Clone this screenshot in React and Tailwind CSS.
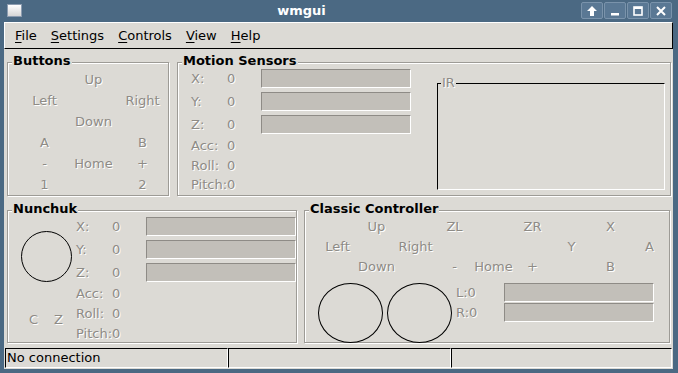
import React from "react";

const G = "text-[#8e8b86] [text-shadow:1px_1px_0_#fff]";

function Frame({ label, className, children }) {
  return (
    <div
      className={
        "relative border border-[#9d9b96] shadow-[inset_1px_1px_0_#fff,1px_1px_0_#fff] " +
        className
      }
    >
      <span className="absolute left-[4px] top-[-10px] px-[1px] bg-[#dcdad5] font-bold text-black leading-[15px] whitespace-nowrap">
        {label}
      </span>
      {children}
    </div>
  );
}

function Bar({ w = "w-[150px]" }) {
  return (
    <div
      className={
        "h-[19px] bg-[#c2bfb9] border border-t-[#8e8b86] border-l-[#8e8b86] border-b-white border-r-white " +
        w
      }
    />
  );
}

function SensorRows() {
  const barRows = ["X:", "Y:", "Z:"];
  return (
    <div className="flex flex-col">
      {barRows.map((l) => (
        <div key={l} className="flex items-center h-[23px]">
          <span className={"w-[36px] " + G}>{l}</span>
          <span className={"w-[34px] " + G}>0</span>
          <Bar />
        </div>
      ))}
      <div className="flex items-center h-[20px]">
        <span className={"w-[36px] " + G}>Acc:</span>
        <span className={G}>0</span>
      </div>
      <div className="flex items-center h-[19px]">
        <span className={"w-[36px] " + G}>Roll:</span>
        <span className={G}>0</span>
      </div>
      <div className="flex items-center h-[19px]">
        <span className={"w-[36px] whitespace-nowrap " + G}>Pitch:</span>
        <span className={G}>0</span>
      </div>
    </div>
  );
}

function NunchukRows() {
  const barRows = ["X:", "Y:", "Z:"];
  return (
    <div className="flex flex-col pt-[4px]">
      {barRows.map((l) => (
        <div key={l} className="flex items-center h-[23px]">
          <span className={"w-[36px] " + G}>{l}</span>
          <span className={"w-[34px] " + G}>0</span>
          <Bar />
        </div>
      ))}
      {["Acc:", "Roll:", "Pitch:"].map((l) => (
        <div key={l} className="flex items-center h-[20px]">
          <span className={"w-[36px] whitespace-nowrap " + G}>{l}</span>
          <span className={G}>0</span>
        </div>
      ))}
    </div>
  );
}

function TitleButton({ children }) {
  return (
    <div className="w-[22px] h-[17px] rounded-[2px] border border-[#7a93ab] bg-[#5a7894] flex items-center justify-center">
      {children}
    </div>
  );
}

export default function App() {
  const btnGrid = [
    "", "Up", "",
    "Left", "", "Right",
    "", "Down", "",
    "A", "", "B",
    "-", "Home", "+",
    "1", "", "2",
  ];
  const classic = [
    "", "Up", "", "ZL", "", "ZR", "", "X", "",
    "Left", "", "Right", "", "", "", "Y", "", "A",
    "", "Down", "", "-", "Home", "+", "", "B", "",
  ];
  return (
    <div className="w-[678px] h-[373px] bg-[#4b6983] flex flex-col font-['DejaVu_Sans',sans-serif] text-[13px] overflow-hidden">
      {/* title bar */}
      <div className="h-[22px] flex items-start">
        <div className="ml-[7px] mt-[4px] w-[15px] h-[13px] border border-[#8c9cb0] bg-gradient-to-b from-white to-[#d6d6d6]" />
        <div className="flex-1 flex justify-center items-center h-[22px] text-white font-bold">
          wmgui
        </div>
        <div className="flex gap-[1px] mt-[2px] mr-[6px]">
          <TitleButton>
            <svg width="10" height="10" viewBox="0 0 10 10">
              <polygon points="5,0 10,5 7,5 7,10 3,10 3,5 0,5" fill="#fff" />
            </svg>
          </TitleButton>
          <TitleButton>
            <svg width="10" height="10" viewBox="0 0 10 10">
              <rect x="1" y="7" width="8" height="2.5" fill="#fff" />
            </svg>
          </TitleButton>
          <TitleButton>
            <svg width="10" height="10" viewBox="0 0 10 10">
              <rect x="1" y="1" width="8" height="8" fill="none" stroke="#fff" strokeWidth="1.6" />
              <rect x="1" y="1" width="8" height="2" fill="#fff" />
            </svg>
          </TitleButton>
          <TitleButton>
            <svg width="10" height="10" viewBox="0 0 10 10">
              <path d="M1 1 L9 9 M9 1 L1 9" stroke="#fff" strokeWidth="2" />
            </svg>
          </TitleButton>
        </div>
      </div>

      {/* client */}
      <div className="ml-[4px] w-[669px] h-[347px] bg-[#dcdad5] flex flex-col">
        {/* menubar */}
        <div className="h-[27px] border-t border-l border-white border-b border-r border-b-black border-r-black flex items-center pl-[3px] text-black">
          {["File", "Settings", "Controls", "View", "Help"].map((m) => (
            <span key={m} className="px-[7px]">
              <span className="underline underline-offset-[2px]">{m[0]}</span>
              {m.slice(1)}
            </span>
          ))}
        </div>

        {/* row 1 */}
        <div className="flex mt-[13px] ml-[3px]">
          <Frame label="Buttons" className="w-[162px] h-[134px]">
            <div className="grid grid-cols-[49px_49px_49px] auto-rows-[21px] ml-[12px] mt-[6px] text-center">
              {btnGrid.map((t, i) => (
                <span key={i} className={"leading-[21px] " + G}>
                  {t}
                </span>
              ))}
            </div>
          </Frame>
          <Frame label="Motion Sensors" className="ml-[8px] w-[494px] h-[134px]">
            <div className="flex">
              <div className="pl-[13px] pt-[4px]">
                <SensorRows />
              </div>
              <div className="relative ml-[26px] mt-[20px] w-[228px] h-[107px] border border-t-black border-l-black border-b-white border-r-white">
                <span className={"absolute left-[3px] top-[-9px] px-[1px] bg-[#dcdad5] leading-[15px] " + G}>
                  IR
                </span>
              </div>
            </div>
          </Frame>
        </div>

        {/* row 2 */}
        <div className="flex mt-[14px] ml-[3px]">
          <Frame label="Nunchuk" className="w-[290px] h-[133px]">
            <div className="flex">
              <div className="w-[68px] flex flex-col">
                <div className="ml-[13px] mt-[20px] w-[51px] h-[51px] rounded-full border border-black" />
                <div className="mt-[28px] h-[20px] flex items-center pl-[21px] gap-[16px]">
                  <span className={G}>C</span>
                  <span className={G}>Z</span>
                </div>
              </div>
              <NunchukRows />
            </div>
          </Frame>
          <Frame label="Classic Controller" className="ml-[7px] w-[366px] h-[133px]">
            <div className="pl-[13px] pt-[6px]">
              <div className="grid grid-cols-[repeat(9,39px)] auto-rows-[20px] text-center">
                {classic.map((t, i) => (
                  <span key={i} className={"leading-[20px] whitespace-nowrap " + G}>
                    {t}
                  </span>
                ))}
              </div>
              <div className="flex mt-[6px]">
                <div className="w-[65px] h-[60px] rounded-[50%] border border-black" />
                <div className="ml-[4px] w-[65px] h-[60px] rounded-[50%] border border-black" />
                <div className="ml-[4px] flex flex-col">
                  {["L:0", "R:0"].map((l) => (
                    <div key={l} className="flex h-[20px]">
                      <span className={"w-[48px] leading-[20px] " + G}>{l}</span>
                      <Bar />
                    </div>
                  ))}
                </div>
              </div>
            </div>
          </Frame>
        </div>

        {/* status bar */}
        <div className="flex h-[20px] mt-[5px] ml-[1px] mr-[1px]">
          <div className="w-[223px] border border-t-black border-l-black border-b-white border-r-white pl-[1px] leading-[18px] text-black">
            No connection
          </div>
          <div className="w-[223px] border border-t-black border-l-black border-b-white border-r-white" />
          <div className="flex-1 border border-t-black border-l-black border-b-white border-r-white" />
        </div>
      </div>
    </div>
  );
}
